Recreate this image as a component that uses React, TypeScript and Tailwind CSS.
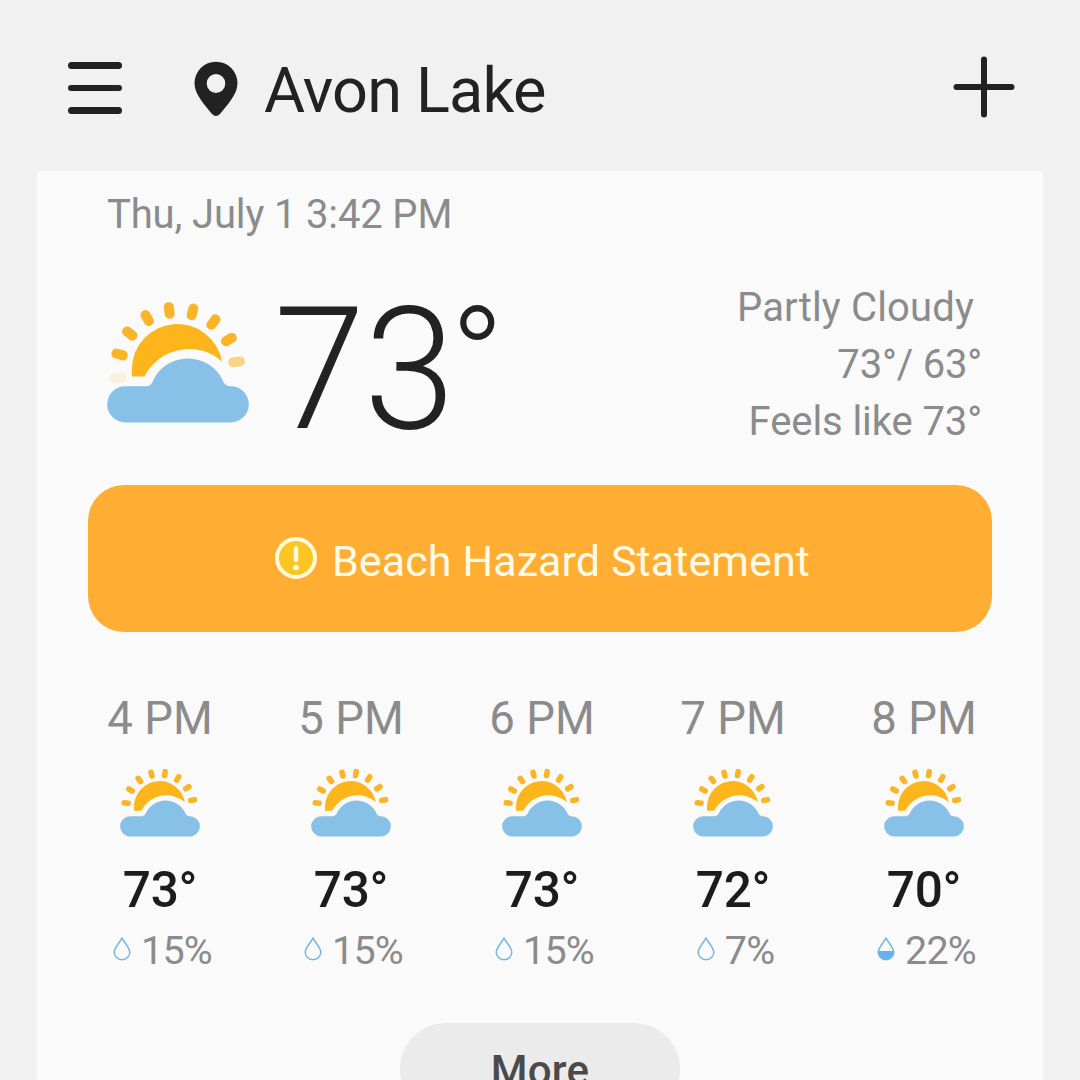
type RaySet = { angle: number; opacity: number }[];

type Hour = {
  time: string;
  temp: string;
  rain: string;
  wet?: boolean;
};

const hours: Hour[] = [
  { time: '4 PM', temp: '73°', rain: '15%' },
  { time: '5 PM', temp: '73°', rain: '15%' },
  { time: '6 PM', temp: '73°', rain: '15%' },
  { time: '7 PM', temp: '72°', rain: '7%' },
  { time: '8 PM', temp: '70°', rain: '22%', wet: true },
];

// Large icon: the rays rotate and fade near the horizon
const currentRays: RaySet = [
  { angle: -97.8, opacity: 0.14 },
  { angle: -75.3, opacity: 1 },
  { angle: -52.8, opacity: 1 },
  { angle: -30.3, opacity: 1 },
  { angle: -7.8, opacity: 1 },
  { angle: 14.7, opacity: 1 },
  { angle: 37.2, opacity: 1 },
  { angle: 59.7, opacity: 1 },
  { angle: 82.5, opacity: 0.55 },
];

const hourlyRays: RaySet = [-83.5, -60, -37, -14, 9, 32.5, 55.5, 78.5].map((angle) => ({
  angle,
  opacity: 1,
}));

function PartlyCloudyIcon({ rays, className }: { rays: RaySet; className: string }) {
  return (
    <svg viewBox="50 64 428 366" className={className}>
      {rays.map((ray) => (
        <rect
          key={ray.angle}
          x="247"
          y="65"
          width="30"
          height="50"
          rx="14"
          fill="#fab427"
          opacity={ray.opacity}
          transform={`rotate(${ray.angle} 262 270)`}
        />
      ))}
      <path d="M125 291 V270 A137 137 0 0 1 397 246 A150 150 0 0 0 163 291 Z" fill="#fcb61c" />
      <path
        d="M105 320 H168 Q183 320 188 305 A116 116 0 0 1 400 305 Q405 320 423 320 A54.500 54.500 0 0 1 423 429 H105 A54.500 54.500 0 0 1 105 320 Z"
        fill="#88c1e7"
      />
    </svg>
  );
}

function DropIcon({ filled }: { filled?: boolean }) {
  return (
    <svg viewBox="0 0 18 24" className="mb-1 h-6 w-[18px] shrink-0">
      {filled && <path d="M1 14 H17 V15.200 A8 7.600 0 0 1 1 15.200 Z" fill="#64b1f4" />}
      <path
        d="M9 1.200 C7 5 1.200 11 1.200 15.200 A7.800 7.600 0 0 0 16.800 15.200 C16.800 11 11 5 9 1.200 Z"
        fill="none"
        stroke="#76b5de"
        strokeWidth="1.500"
      />
    </svg>
  );
}

function Header() {
  return (
    <header className="flex h-[171px] items-start pl-[68px] pr-[65px] text-[#222222]">
      <button className="mt-[62px] flex flex-col gap-4" aria-label="Menu">
        <span className="h-[6.500px] w-[54px] rounded-full bg-[#222222]" />
        <span className="h-[6.500px] w-[54px] rounded-full bg-[#222222]" />
        <span className="h-[6.500px] w-[54px] rounded-full bg-[#222222]" />
      </button>
      <svg viewBox="0 0 44 56" className="ml-[72px] mt-[61px] h-14 w-11">
        <path
          fillRule="evenodd"
          d="M22 .7 A21.500 21.500 0 0 1 43.500 22.200 C43.500 34 32 45 26 53 Q22 57 18 53 C12 45 .5 34 .5 22.200 A21.500 21.500 0 0 1 22 .7 Z M22 13 a9.300 9.500 0 1 0 0 19 a9.300 9.500 0 1 0 0 -19 Z"
          fill="currentColor"
        />
      </svg>
      <h1 className="ml-[26px] mt-[51px] text-[63px] leading-[80px] tracking-[-0.8px] whitespace-nowrap">Avon Lake</h1>
      <button className="ml-auto mt-14" aria-label="Add location">
        <svg viewBox="0 0 62 62" className="size-[62px]">
          <path d="M31 3.500 V58.500 M3.500 31 H58.500" stroke="currentColor" strokeWidth="6" strokeLinecap="round" />
        </svg>
      </button>
    </header>
  );
}

function CurrentWeather() {
  return (
    <section className="mt-10 flex h-[171px] items-start">
      <PartlyCloudyIcon rays={currentRays} className="mt-[22px] h-[122px] w-[142px] shrink-0" />
      <div className="ml-[25px] mt-[5px] flex items-start font-light text-[#222222]">
        <span className="block w-[176px] origin-left scale-x-96 text-[171px] leading-[171px] tracking-[-1px]">73</span>
        <span className="mt-1 block text-[144px] leading-[144px]">°</span>
      </div>
      <div className="ml-auto text-right text-[40px] leading-[57px] whitespace-nowrap">
        <p className="pr-2 tracking-[0.15px]">Partly Cloudy</p>
        <p className="tracking-[-0.2px]">73°/ 63°</p>
        <p className="tracking-[-0.1px]">Feels like 73°</p>
      </div>
    </section>
  );
}

function AlertBanner() {
  return (
    <div className="mx-[51px] mt-[35px] flex h-[147px] items-center justify-center rounded-[36px] bg-[#ffae33] pl-[5px]">
      <svg viewBox="0 0 42 42" className="mr-[15px] mb-0.5 size-[42px]">
        <circle cx="21" cy="21" r="19" fill="#fbc523" stroke="#fffbdc" strokeWidth="4" />
        <path d="M21 11.500 V23" stroke="#fffbdc" strokeWidth="4.500" strokeLinecap="round" />
        <circle cx="21" cy="30.500" r="2.800" fill="#fffbdc" />
      </svg>
      <span className="pt-1 text-[43px] leading-[48px] tracking-[0.1px] whitespace-nowrap text-[#fffbe6]">
        Beach Hazard Statement
      </span>
    </div>
  );
}

export default function App() {
  return (
    <div className="h-[1080px] w-[1080px] overflow-hidden bg-[#f1f1f1] font-['Roboto',sans-serif]">
      <Header />

      <main className="mx-[37px] h-[909px] overflow-hidden bg-[#fafafa] pt-5 text-[#8b8b8b]">
        <div className="pl-[70px] pr-[61px]">
          <p className="text-[40px] leading-[48px] tracking-[-0.15px]">Thu, July 1 3:42 PM</p>
          <CurrentWeather />
        </div>

        <AlertBanner />

        <div className="mt-[59px] ml-[27.500px] grid w-[955px] grid-cols-5">
          {hours.map((hour) => (
            <div key={hour.time} className="flex flex-col items-center">
              <span className="text-[45.500px] leading-[56px]">{hour.time}</span>
              <PartlyCloudyIcon rays={hourlyRays} className="mt-[21px] h-[69px] w-20" />
              <span className="mt-[23px] text-[49.500px] leading-[60px] font-medium tracking-[-0.3px] text-[#1c1c1c]">
                {hour.temp}
              </span>
              <div className="mt-[7px] flex h-12 items-center gap-2.5 pl-[5px]">
                <DropIcon filled={hour.wet} />
                <span className="text-[39.500px] leading-[48px] tracking-[-0.8px]">{hour.rain}</span>
              </div>
            </div>
          ))}
        </div>

        <button className="mx-auto mt-12 block h-[92px] w-[280px] rounded-[46px] bg-[#ebebeb] text-[42px] leading-[95px] font-medium tracking-[0.3px] text-[#4a4a4a]">
          More
        </button>
      </main>
    </div>
  );
}
